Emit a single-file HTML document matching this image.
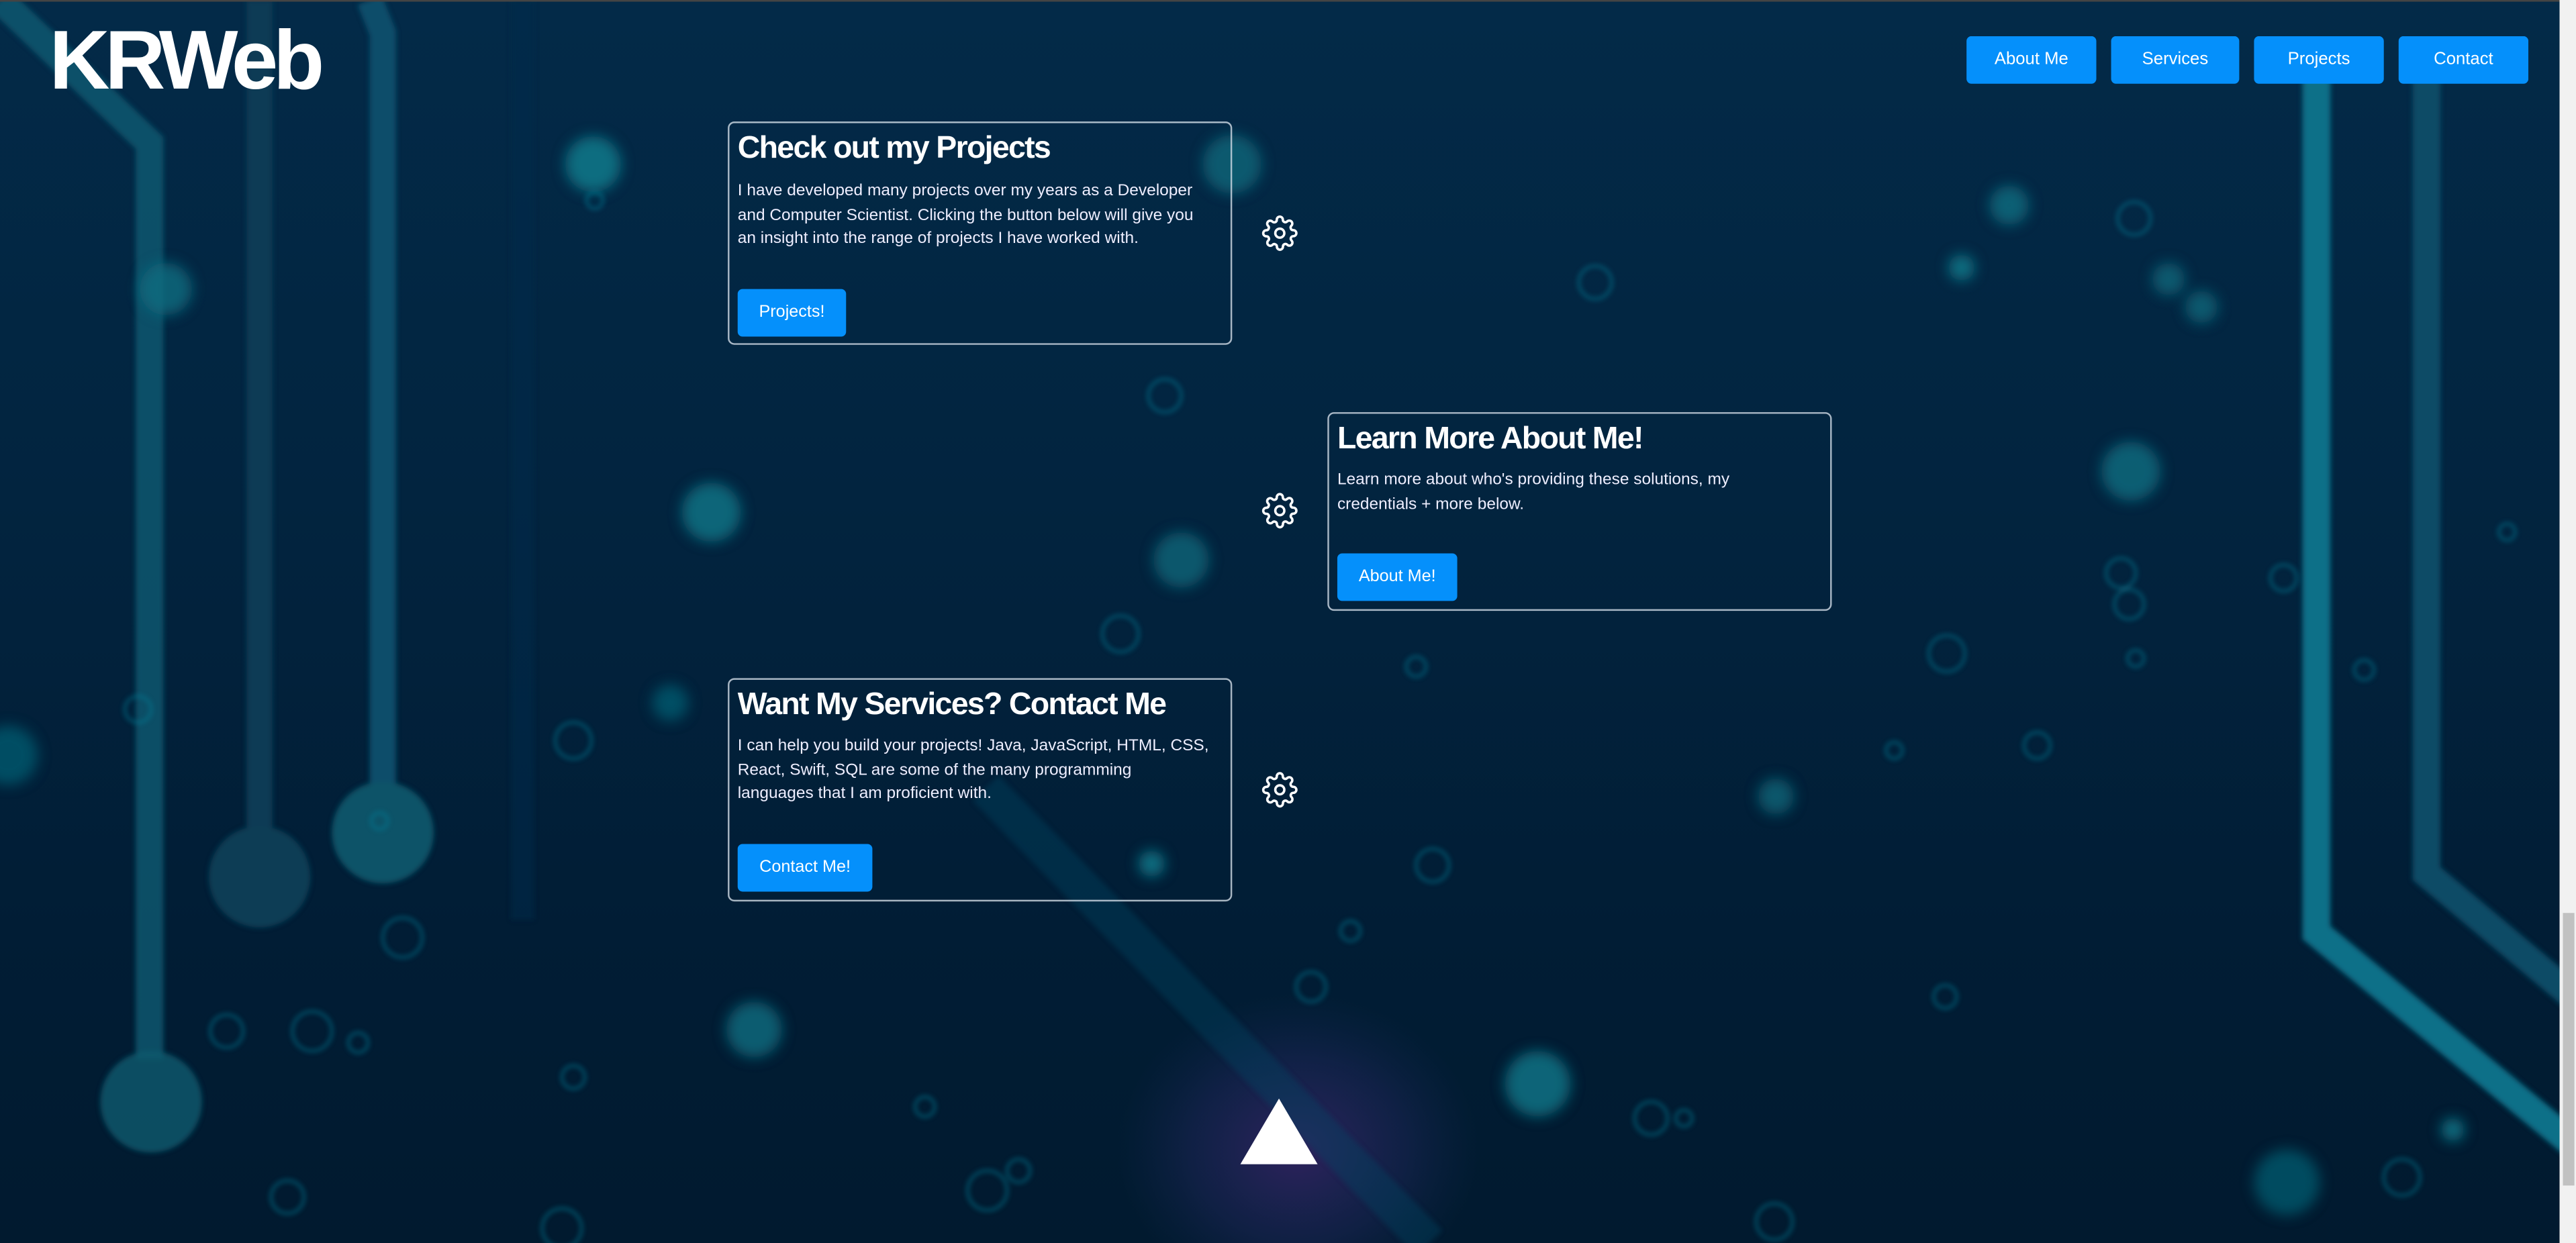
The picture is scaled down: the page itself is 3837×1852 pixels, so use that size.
<!DOCTYPE html>
<html><head><meta charset="utf-8">
<style>
html,body{margin:0;padding:0;width:3837px;height:1852px;overflow:hidden;background:#02223d;}
#w{position:absolute;left:0;top:0;width:1568px;height:757px;transform:scale(2.4471,2.4465);transform-origin:0 0;overflow:hidden;
background:linear-gradient(180deg,#032a48 0%,#02243f 40%,#011d35 75%,#011a2f 100%);font-family:"Liberation Sans",sans-serif;}
.bg{position:absolute;left:0;top:0}
.logo{position:absolute;left:30px;top:9px;color:#fff;font-weight:bold;font-size:51px;letter-spacing:-3px;line-height:56px}
.nav{position:absolute;top:22px;height:29px;background:#0590fb;border-radius:3px;color:#fff;font-size:10.5px;line-height:29px;text-align:center}
.card{position:absolute;border:1px solid rgba(210,220,230,0.8);border-radius:4px;box-sizing:border-box;color:#fff}
.card h2{position:absolute;left:5px;margin:0;font-size:19px;letter-spacing:-0.7px;font-weight:bold;white-space:nowrap}
.card p{position:absolute;left:5px;margin:0;font-size:10px;line-height:14.6px;white-space:nowrap;color:#eef}
.btn{position:absolute;left:5px;height:29px;background:#0590fb;border-radius:3px;color:#fff;font-size:10.3px;line-height:29px;text-align:center}
.gear{position:absolute;width:22px;height:22px}
.sb{position:absolute;left:1558px;top:0;width:10px;height:757px;background:#f1f1f1}
.th{position:absolute;left:1560px;top:556px;width:7px;height:166px;background:#c1c1c1}
</style></head><body><div id="w">
<svg class="bg" width="1568" height="757" viewBox="0 0 1568 757">
<defs>
<filter id="b1"><feGaussianBlur stdDeviation="1.5"/></filter>
<filter id="b3"><feGaussianBlur stdDeviation="4"/></filter>
<radialGradient id="pg" cx="0.5" cy="0.5" r="0.5"><stop offset="0" stop-color="#3a2468" stop-opacity="0.8"/><stop offset="0.6" stop-color="#2a2a68" stop-opacity="0.35"/><stop offset="1" stop-color="#1a2a5a" stop-opacity="0"/></radialGradient>
</defs>
<ellipse cx="790" cy="700" rx="110" ry="95" fill="url(#pg)"/>
<g filter="url(#b1)">
<path d="M0 0 L91 87 L91 645" stroke="#0a5a72" stroke-width="17" fill="none" opacity="0.8"/>
<circle cx="92" cy="671" r="31" fill="#0b5a6e" opacity="0.8"/>
<path d="M158 0 L158 510" stroke="#073a55" stroke-width="16" fill="none"/>
<circle cx="158" cy="534" r="31" fill="#073c55"/>
<path d="M225 0 L233 20 L233 480" stroke="#0a4e6a" stroke-width="16" fill="none"/>
<circle cx="233" cy="507" r="31" fill="#0b5368"/>
<path d="M318 0 L318 560" stroke="#042e4a" stroke-width="14" fill="none" opacity="0.5"/>
<path d="M1410 40 L1410 568 L1570 700" stroke="#0b7088" stroke-width="17" fill="none"/>
<path d="M1477 40 L1477 532 L1570 610" stroke="#0a4c66" stroke-width="17" fill="none"/>
<path d="M600 480 L870 757" stroke="#0b4a66" stroke-width="22" fill="none" opacity="0.35"/>
</g>
<g filter="url(#b3)" fill="#0a6d80">
<circle cx="361" cy="100" r="17"/><circle cx="433" cy="312" r="18" opacity="0.9"/><circle cx="719" cy="341" r="17" opacity="0.7"/>
<circle cx="101" cy="176" r="16" opacity="0.8"/><circle cx="936" cy="660" r="20" opacity="0.9"/><circle cx="459" cy="627" r="17" opacity="0.8"/>
<circle cx="750" cy="100" r="18" opacity="0.7"/><circle cx="1223" cy="125" r="12" opacity="0.8"/><circle cx="1297" cy="287" r="18" opacity="0.8"/>
<circle cx="1081" cy="485" r="11" opacity="0.7"/><circle cx="408" cy="428" r="11" opacity="0.6"/><circle cx="1340" cy="187" r="10" opacity="0.7"/>
<circle cx="1493" cy="688" r="7"/><circle cx="1194" cy="163" r="8"/><circle cx="701" cy="526" r="8"/><circle cx="1392" cy="720" r="20" opacity="0.6"/>
<circle cx="5" cy="460" r="18" opacity="0.6"/><circle cx="1320" cy="170" r="10" opacity="0.7"/>
</g>
<g fill="none" stroke="#0e7e96" stroke-width="1.7" filter="url(#b1)" opacity="0.6">
<circle cx="1299" cy="133" r="10"/><circle cx="971" cy="172" r="10"/><circle cx="709" cy="241" r="10"/><circle cx="682" cy="386" r="11"/>
<circle cx="349" cy="451" r="11"/><circle cx="245" cy="571" r="12"/><circle cx="190" cy="628" r="12"/><circle cx="138" cy="628" r="10"/>
<circle cx="349" cy="656" r="7"/><circle cx="175" cy="729" r="10"/><circle cx="342" cy="748" r="12"/><circle cx="601" cy="725" r="12"/>
<circle cx="798" cy="601" r="9"/><circle cx="872" cy="527" r="10"/><circle cx="1005" cy="681" r="10"/><circle cx="1080" cy="744" r="11"/>
<circle cx="1185" cy="398" r="11"/><circle cx="1291" cy="349" r="9"/><circle cx="1390" cy="352" r="8"/><circle cx="1462" cy="717" r="11"/>
<circle cx="84" cy="432" r="8"/><circle cx="1240" cy="454" r="8"/><circle cx="1184" cy="607" r="7"/><circle cx="1526" cy="324" r="5"/>
<circle cx="1439" cy="408" r="6"/><circle cx="1300" cy="401" r="5"/><circle cx="563" cy="674" r="6"/><circle cx="218" cy="635" r="6"/>
<circle cx="862" cy="406" r="6"/><circle cx="1153" cy="457" r="5"/><circle cx="822" cy="567" r="6"/><circle cx="231" cy="500" r="5"/><circle cx="362" cy="122" r="5"/>
<circle cx="1025" cy="681" r="5"/><circle cx="620" cy="713" r="7"/><circle cx="1296" cy="368" r="9"/>
</g>
<polygon points="755,709 802,709 778.5,669" fill="#fff"/>
</svg>
<div style="position:absolute;left:0;top:0;width:1568px;height:1px;background:#444"></div>
<div class="logo">KRWeb</div>
<div class="nav" style="left:1197px;width:79px">About Me</div>
<div class="nav" style="left:1285px;width:78px">Services</div>
<div class="nav" style="left:1372px;width:79px">Projects</div>
<div class="nav" style="left:1460px;width:79px">Contact</div>

<div class="card" style="left:443px;top:74px;width:307px;height:136px">
<h2 style="top:5px">Check out my Projects</h2>
<p style="top:35px">I have developed many projects over my years as a Developer<br>and Computer Scientist. Clicking the button below will give you<br>an insight into the range of projects I have worked with.</p>
<div class="btn" style="top:101px;width:66px">Projects!</div></div>

<div class="card" style="left:808px;top:251px;width:307px;height:121px">
<h2 style="top:5px">Learn More About Me!</h2>
<p style="top:34px">Learn more about who's providing these solutions, my<br>credentials + more below.</p>
<div class="btn" style="top:85px;width:73px">About Me!</div></div>

<div class="card" style="left:443px;top:413px;width:307px;height:136px">
<h2 style="top:5px">Want My Services? Contact Me</h2>
<p style="top:34px">I can help you build your projects! Java, JavaScript, HTML, CSS,<br>React, Swift, SQL are some of the many programming<br>languages that I am proficient with.</p>
<div class="btn" style="top:100px;width:82px">Contact Me!</div></div>

<svg class="gear" style="left:768px;top:131px" viewBox="0 0 24 24" fill="none" stroke="#fff" stroke-width="1.6" stroke-linejoin="round"><circle cx="12" cy="12" r="3"/><path d="M19.4 15a1.65 1.65 0 0 0 .33 1.82l.06.06a2 2 0 0 1-2.83 2.83l-.06-.06a1.65 1.65 0 0 0-1.82-.33 1.65 1.65 0 0 0-1 1.51V21a2 2 0 0 1-4 0v-.09A1.65 1.65 0 0 0 9 19.4a1.65 1.65 0 0 0-1.82.33l-.06.06a2 2 0 0 1-2.83-2.83l.06-.06a1.65 1.65 0 0 0 .33-1.820 1.65 1.65 0 0 0-1.51-1H3a2 2 0 0 1 0-4h.09A1.65 1.65 0 0 0 4.6 9a1.65 1.65 0 0 0-.33-1.82l-.06-.06a2 2 0 0 1 2.83-2.83l.06.06a1.65 1.65 0 0 0 1.82.33H9a1.65 1.65 0 0 0 1-1.51V3a2 2 0 0 1 4 0v.09a1.65 1.65 0 0 0 1 1.51 1.65 1.65 0 0 0 1.82-.33l.06-.06a2 2 0 0 1 2.83 2.83l-.06.06a1.65 1.65 0 0 0-.33 1.82V9a1.65 1.65 0 0 0 1.51 1H21a2 2 0 0 1 0 4h-.09a1.65 1.65 0 0 0-1.51 1z"/></svg>
<svg class="gear" style="left:768px;top:300px" viewBox="0 0 24 24" fill="none" stroke="#fff" stroke-width="1.6" stroke-linejoin="round"><circle cx="12" cy="12" r="3"/><path d="M19.4 15a1.65 1.65 0 0 0 .33 1.82l.06.06a2 2 0 0 1-2.83 2.83l-.06-.06a1.65 1.65 0 0 0-1.82-.33 1.65 1.65 0 0 0-1 1.51V21a2 2 0 0 1-4 0v-.09A1.65 1.65 0 0 0 9 19.4a1.65 1.65 0 0 0-1.82.33l-.06.06a2 2 0 0 1-2.83-2.83l.06-.06a1.65 1.65 0 0 0 .33-1.82 1.65 1.65 0 0 0-1.51-1H3a2 2 0 0 1 0-4h.09A1.65 1.65 0 0 0 4.6 9a1.65 1.65 0 0 0-.33-1.82l-.06-.06a2 2 0 0 1 2.83-2.83l.06.06a1.65 1.65 0 0 0 1.82.33H9a1.65 1.65 0 0 0 1-1.51V3a2 2 0 0 1 4 0v.09a1.65 1.65 0 0 0 1 1.51 1.65 1.65 0 0 0 1.82-.33l.06-.06a2 2 0 0 1 2.83 2.83l-.06.06a1.65 1.65 0 0 0-.33 1.82V9a1.65 1.65 0 0 0 1.51 1H21a2 2 0 0 1 0 4h-.09a1.65 1.65 0 0 0-1.51 1z"/></svg>
<svg class="gear" style="left:768px;top:470px" viewBox="0 0 24 24" fill="none" stroke="#fff" stroke-width="1.6" stroke-linejoin="round"><circle cx="12" cy="12" r="3"/><path d="M19.4 15a1.65 1.65 0 0 0 .33 1.82l.06.06a2 2 0 0 1-2.83 2.83l-.06-.06a1.65 1.65 0 0 0-1.82-.33 1.65 1.65 0 0 0-1 1.51V21a2 2 0 0 1-4 0v-.09A1.65 1.65 0 0 0 9 19.4a1.65 1.65 0 0 0-1.82.33l-.06.06a2 2 0 0 1-2.83-2.83l.06-.06a1.65 1.65 0 0 0 .33-1.82 1.65 1.65 0 0 0-1.51-1H3a2 2 0 0 1 0-4h.09A1.65 1.65 0 0 0 4.6 9a1.65 1.65 0 0 0-.33-1.82l-.06-.06a2 2 0 0 1 2.83-2.83l.06.06a1.65 1.65 0 0 0 1.82.33H9a1.65 1.65 0 0 0 1-1.51V3a2 2 0 0 1 4 0v.09a1.65 1.65 0 0 0 1 1.51 1.65 1.65 0 0 0 1.82-.33l.06-.06a2 2 0 0 1 2.83 2.83l-.06.06a1.65 1.65 0 0 0-.33 1.82V9a1.65 1.65 0 0 0 1.51 1H21a2 2 0 0 1 0 4h-.09a1.65 1.65 0 0 0-1.51 1z"/></svg>

<div class="sb"></div><div class="th"></div>
</div></body></html>
